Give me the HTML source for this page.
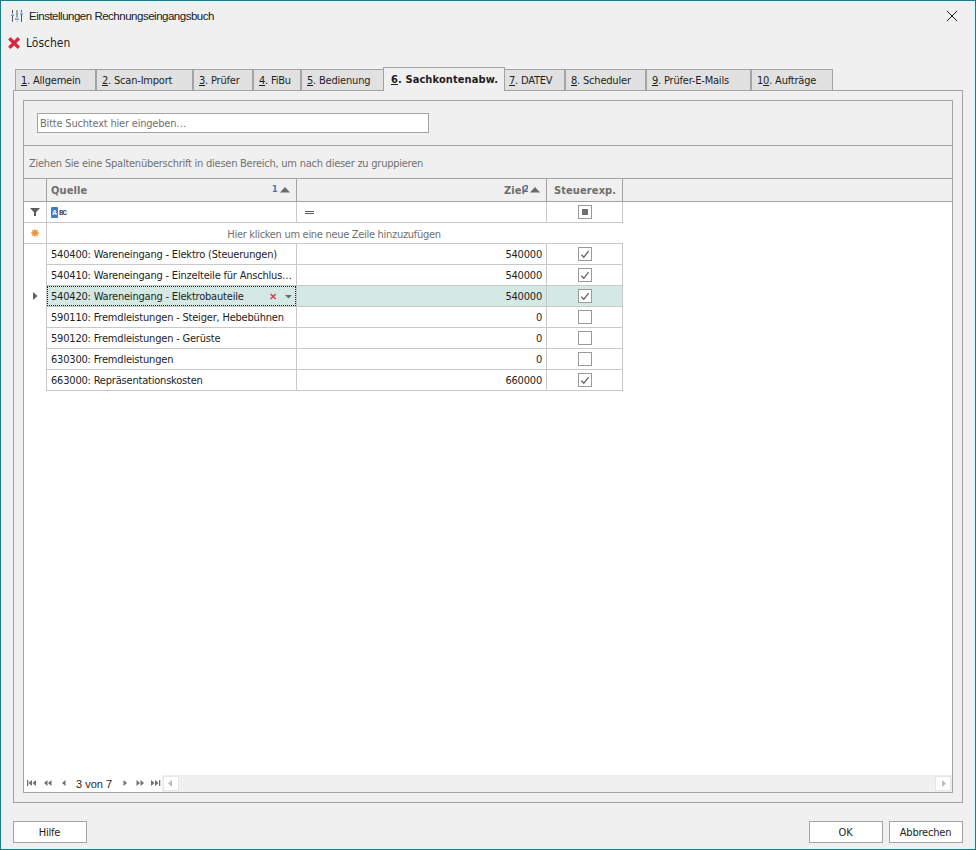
<!DOCTYPE html>
<html lang="de"><head><meta charset="utf-8"><title>Einstellungen Rechnungseingangsbuch</title>
<style>
*{box-sizing:border-box;margin:0;padding:0}
html,body{width:976px;height:850px;overflow:hidden;background:#f0f0f0}
body{font-family:"DejaVu Sans Condensed","Liberation Sans",sans-serif;font-size:11px;color:#1e1e1e;position:relative;letter-spacing:-0.2px}
.abs{position:absolute}
#win{position:absolute;left:0;top:0;width:976px;height:850px;border:1px solid #217a80;box-shadow:inset 0 0 0 1px #ccfffd;background:#f0f0f0}
#title{left:29px;top:9px;font-family:"Liberation Sans",sans-serif;font-size:11.5px;line-height:14px;color:#202020;white-space:nowrap;letter-spacing:-0.49px}
#del{left:26px;top:36px;font-size:12px;line-height:14px;letter-spacing:0;white-space:nowrap;color:#1e1e1e}
.tab{position:absolute;top:69px;height:21px;background:#e1e1e1;border:1px solid #a3a3a3;border-bottom:none;line-height:21px;padding-left:5px;white-space:nowrap;font-size:11px;color:#1e1e1e}
.tab.act{top:67px;height:24px;background:#f0f0f0;font-weight:bold;letter-spacing:0.1px;z-index:3;line-height:23px;padding-left:7px}
#panel{left:13px;top:90px;width:950px;height:713px;border:1px solid #a3a3a3;background:#f0f0f0}
#inner{left:23px;top:100px;width:930px;height:693px;border:1px solid #a3a3a3;background:#f0f0f0}
#search{left:37px;top:113px;width:392px;height:20px;border:1px solid #a3a3a3;background:#fff;color:#707070;line-height:18px;padding:1px 0 0 2px;white-space:nowrap;overflow:hidden}
#grp{left:29px;top:157px;line-height:14px;letter-spacing:-0.25px;color:#707070;white-space:nowrap}
.hl{position:absolute;height:1px;background:#a3a3a3}
.vl{position:absolute;width:1px;background:#a3a3a3}
.lg{background:#c8c8c8}
#body{left:24px;top:202px;width:928px;height:573px;background:#fff}
.hd{position:absolute;top:184px;line-height:14px;font-weight:bold;letter-spacing:0.1px;color:#6e6e6e;white-space:nowrap}
.btn{position:absolute;top:821px;height:22px;width:74px;border:1px solid #a3a3a3;background:#fff;text-align:center;line-height:20px;padding:1px 1px 0 0;color:#1e1e1e}
.t{position:absolute;line-height:14px;white-space:nowrap;color:#1e1e1e}
.t.r{text-align:right;width:100px;left:442px}
.cb{position:absolute;left:578px;width:14px;height:14px;border:1px solid #9a9a9a;background:#fff}
.cb svg{position:absolute;left:0;top:0}
</style></head><body>
<div id="win"></div>
<svg class="abs" style="left:10px;top:10px" width="14" height="13" viewBox="0 0 14 13">
<defs><linearGradient id="hg" x1="0" y1="0" x2="0" y2="1"><stop offset="0" stop-color="#d6e5f6"/><stop offset="0.5" stop-color="#a3c6ec"/><stop offset="1" stop-color="#4a88ca"/></linearGradient></defs>
<rect x="2" y="0" width="1" height="11.8" fill="#555"/><rect x="11" y="0" width="1" height="11.8" fill="#555"/>
<rect x="6" y="0" width="2" height="8" fill="#a2a2a2"/><rect x="6" y="11" width="2" height="0.7" fill="#b5b5b5"/>
<rect x="1" y="3.2" width="3" height="2.7" fill="url(#hg)"/><rect x="5" y="7.2" width="4" height="2.8" fill="url(#hg)"/><rect x="10" y="1.8" width="3" height="2.8" fill="url(#hg)"/>
</svg>
<div class="abs" id="title">Einstellungen Rechnungseingangsbuch</div>
<svg class="abs" style="left:946px;top:10px" width="12" height="12" viewBox="0 0 12 12"><path d="M1 1l10 10M11 1L1 11" stroke="#151515" stroke-width="1" fill="none"/></svg>
<svg class="abs" style="left:8px;top:37px" width="13" height="13" viewBox="0 0 13 13"><path d="M1.3 1.3L10.9 10.9M10.9 1.3L1.3 10.9" stroke="#d6293f" stroke-width="3.4" fill="none"/></svg>
<div class="abs" id="del">Löschen</div>

<div class="abs" id="panel"></div>
<div class="tab" style="left:15px;width:81px"><u>1</u>. Allgemein</div>
<div class="tab" style="left:96px;width:97px"><u>2</u>. Scan-Import</div>
<div class="tab" style="left:193px;width:60px"><u>3</u>. Prüfer</div>
<div class="tab" style="left:253px;width:48px"><u>4</u>. FiBu</div>
<div class="tab" style="left:301px;width:84px"><u>5</u>. Bedienung</div>
<div class="tab act" style="left:383px;width:122px"><u>6</u>. Sachkontenabw.</div>
<div class="tab" style="left:503px;width:62px"><u>7</u>. DATEV</div>
<div class="tab" style="left:565px;width:81px"><u>8</u>. Scheduler</div>
<div class="tab" style="left:646px;width:105px"><u>9</u>. Prüfer-E-Mails</div>
<div class="tab" style="left:751px;width:82px">1<u>0</u>. Aufträge</div>

<div class="abs" id="inner"></div>
<div class="abs" id="search">Bitte Suchtext hier eingeben…</div>
<div class="hl" style="left:24px;top:145px;width:928px"></div>
<div class="abs" id="grp">Ziehen Sie eine Spaltenüberschrift in diesen Bereich, um nach dieser zu gruppieren</div>

<!-- grid -->
<div class="abs" id="body"></div>
<div class="hl" style="left:24px;top:178px;width:928px"></div>
<div class="hl" style="left:24px;top:201px;width:928px"></div>
<div class="vl" style="left:46px;top:178px;height:24px"></div>
<div class="vl" style="left:296px;top:178px;height:24px"></div>
<div class="vl" style="left:546px;top:178px;height:24px"></div>
<div class="vl" style="left:622px;top:178px;height:24px"></div>
<div class="hd" style="left:51px">Quelle</div>
<div class="hd" style="left:504px">Ziel</div>
<div class="hd" style="left:554px">Steuerexp.</div>

<div class="abs" style="left:47px;top:286px;width:575px;height:20px;background:#d5e9e4"></div>
<div class="hl lg" style="left:24px;top:222px;width:599px"></div>
<div class="hl lg" style="left:24px;top:243px;width:599px"></div>
<div class="hl lg" style="left:46px;top:264px;width:577px"></div>
<div class="hl lg" style="left:46px;top:285px;width:577px"></div>
<div class="hl lg" style="left:46px;top:306px;width:577px"></div>
<div class="hl lg" style="left:46px;top:327px;width:577px"></div>
<div class="hl lg" style="left:46px;top:348px;width:577px"></div>
<div class="hl lg" style="left:46px;top:369px;width:577px"></div>
<div class="hl lg" style="left:46px;top:390px;width:577px"></div>
<div class="vl lg" style="left:46px;top:202px;height:189px"></div>
<div class="vl lg" style="left:296px;top:202px;height:21px"></div>
<div class="vl lg" style="left:546px;top:202px;height:21px"></div>
<div class="vl lg" style="left:622px;top:202px;height:21px"></div>
<div class="vl lg" style="left:296px;top:243px;height:148px"></div>
<div class="vl lg" style="left:546px;top:243px;height:148px"></div>
<div class="vl lg" style="left:622px;top:243px;height:148px"></div>
<div class="abs" style="left:47px;top:286px;width:249px;height:20px;border:1px dotted #222"></div>
<svg class="abs" style="left:30px;top:207px" width="11" height="10" viewBox="0 0 11 10"><path d="M0 1h10L6 5.2V9H4V5.2z" fill="#5c5c5c"/></svg>
<div class="abs" style="left:51px;top:207px;width:7px;height:11px;background:#3f7fc1;border-radius:1px;font-family:'Liberation Mono',monospace;font-size:7.5px;line-height:12px;font-weight:bold;letter-spacing:0;color:#fff;text-align:center;overflow:hidden">A</div>
<div class="abs" style="left:59px;top:207px;font-family:'Liberation Mono',monospace;font-size:7.5px;line-height:12px;font-weight:bold;letter-spacing:-0.9px;color:#4a4a4a;white-space:nowrap">BC</div>
<div class="abs" style="left:305px;top:211px;width:9px;height:1px;background:#5a5a5a"></div>
<div class="abs" style="left:305px;top:213px;width:9px;height:1px;background:#5a5a5a"></div>
<div class="cb" style="top:205px"><div class="abs" style="left:3px;top:3px;width:6px;height:6px;background:#707070"></div></div>
<svg class="abs" style="left:30px;top:228px" width="10" height="10" viewBox="0 0 10 10"><polygon points="5.00,0.20 5.96,2.69 8.39,1.61 7.31,4.04 9.80,5.00 7.31,5.96 8.39,8.39 5.96,7.31 5.00,9.80 4.04,7.31 1.61,8.39 2.69,5.96 0.20,5.00 2.69,4.04 1.61,1.61 4.04,2.69" fill="#f0943c"/></svg>
<div class="t" style="left:46px;width:576px;text-align:center;top:228px;letter-spacing:-0.3px;color:#707070">Hier klicken um eine neue Zeile hinzuzufügen</div>
<div class="t" style="left:51px;top:248px">540400: Wareneingang - Elektro (Steuerungen)</div>
<div class="t r" style="top:248px">540000</div>
<div class="cb" style="top:247px"><svg width="12" height="12" viewBox="0 0 12 12"><path d="M2.4 6.6L4.8 9.3L9.6 3.2" stroke="#606060" stroke-width="1.3" fill="none"/></svg></div>
<div class="t" style="left:51px;top:269px">540410: Wareneingang - Einzelteile für Anschlus…</div>
<div class="t r" style="top:269px">540000</div>
<div class="cb" style="top:268px"><svg width="12" height="12" viewBox="0 0 12 12"><path d="M2.4 6.6L4.8 9.3L9.6 3.2" stroke="#606060" stroke-width="1.3" fill="none"/></svg></div>
<div class="t" style="left:51px;top:290px">540420: Wareneingang - Elektrobauteile</div>
<div class="t r" style="top:290px">540000</div>
<div class="cb" style="top:289px"><svg width="12" height="12" viewBox="0 0 12 12"><path d="M2.4 6.6L4.8 9.3L9.6 3.2" stroke="#606060" stroke-width="1.3" fill="none"/></svg></div>
<div class="t" style="left:51px;top:311px">590110: Fremdleistungen - Steiger, Hebebühnen</div>
<div class="t r" style="top:311px">0</div>
<div class="cb" style="top:310px"></div>
<div class="t" style="left:51px;top:332px">590120: Fremdleistungen - Gerüste</div>
<div class="t r" style="top:332px">0</div>
<div class="cb" style="top:331px"></div>
<div class="t" style="left:51px;top:353px">630300: Fremdleistungen</div>
<div class="t r" style="top:353px">0</div>
<div class="cb" style="top:352px"></div>
<div class="t" style="left:51px;top:374px">663000: Repräsentationskosten</div>
<div class="t r" style="top:374px">660000</div>
<div class="cb" style="top:373px"><svg width="12" height="12" viewBox="0 0 12 12"><path d="M2.4 6.6L4.8 9.3L9.6 3.2" stroke="#606060" stroke-width="1.3" fill="none"/></svg></div>
<svg class="abs" style="left:33px;top:292px" width="5" height="8" viewBox="0 0 5 8"><path d="M0 0l4.5 4L0 8z" fill="#606060"/></svg>
<svg class="abs" style="left:270px;top:293px" width="7" height="7" viewBox="0 0 7 7"><path d="M0.6 0.9l5 5M5.6 0.9L0.6 5.9" stroke="#d9364a" stroke-width="1.4" fill="none"/></svg>
<svg class="abs" style="left:285px;top:295px" width="7" height="4" viewBox="0 0 7 4"><path d="M0 0h7L3.5 3.6z" fill="#6a6a6a"/></svg>
<div class="abs" style="left:272px;top:186px;font-family:'DejaVu Sans','Liberation Sans',sans-serif;font-size:8px;line-height:8px;font-weight:bold;color:#3c78b4;letter-spacing:0">1</div>
<svg class="abs" style="left:280px;top:187px" width="10" height="6" viewBox="0 0 10 6"><path d="M0 5.5L5 0l5 5.5z" fill="#6a6a6a"/></svg>
<div class="abs" style="left:523px;top:185px;width:5px;height:7px;overflow:hidden;font-family:'DejaVu Sans','Liberation Sans',sans-serif;font-size:9px;line-height:8px;font-weight:bold;color:#3c78b4;letter-spacing:0">2</div>
<svg class="abs" style="left:530px;top:187px" width="10" height="6" viewBox="0 0 10 6"><path d="M0 5.5L5 0l5 5.5z" fill="#6a6a6a"/></svg>
<div class="abs" style="left:24px;top:774px;width:138px;height:18px;background:#fff"></div>
<div class="abs" style="left:162px;top:775px;width:790px;height:17px;background:#f0f0f0"></div>
<div class="abs" style="left:163px;top:776px;width:16px;height:15px;background:#fff;border:1px solid #e6e6e6"></div>
<div class="abs" style="left:935px;top:776px;width:16px;height:15px;background:#fff;border:1px solid #e6e6e6"></div>
<svg class="abs" style="left:168px;top:780px" width="4" height="7" viewBox="0 0 4 7"><path d="M4 0L0 3.5L4 7z" fill="#bdbdbd"/></svg>
<svg class="abs" style="left:942px;top:780px" width="4" height="7" viewBox="0 0 4 7"><path d="M0 0L4 3.5L0 7z" fill="#bdbdbd"/></svg>
<svg class="abs" style="left:24px;top:774px" width="140" height="18" viewBox="0 0 140 18"><g fill="#707070"><rect x="3" y="6" width="1.3" height="6"/><path d="M8 6L4.5 9L8 12z"/><path d="M12 6L8.5 9L12 12z"/><path d="M23.5 6L20 9L23.5 12z"/><path d="M27.5 6L24 9L27.5 12z"/><path d="M41.5 6L38 9L41.5 12z"/><path d="M99.5 6L103 9L99.5 12z"/><path d="M112.5 6L116 9L112.5 12z"/><path d="M116.5 6L120 9L116.5 12z"/><path d="M127 6L130.5 9L127 12z"/><path d="M131 6L134.5 9L131 12z"/><rect x="135" y="6" width="1.3" height="6"/></g></svg>
<div class="abs" style="left:76px;top:777px;font-family:'Liberation Sans',sans-serif;font-size:11px;line-height:14px;letter-spacing:0;color:#1e1e1e;white-space:nowrap">3 von 7</div>

<div class="btn" style="left:13px">Hilfe</div>
<div class="btn" style="left:809px">OK</div>
<div class="btn" style="left:889px">Abbrechen</div>
</body></html>
